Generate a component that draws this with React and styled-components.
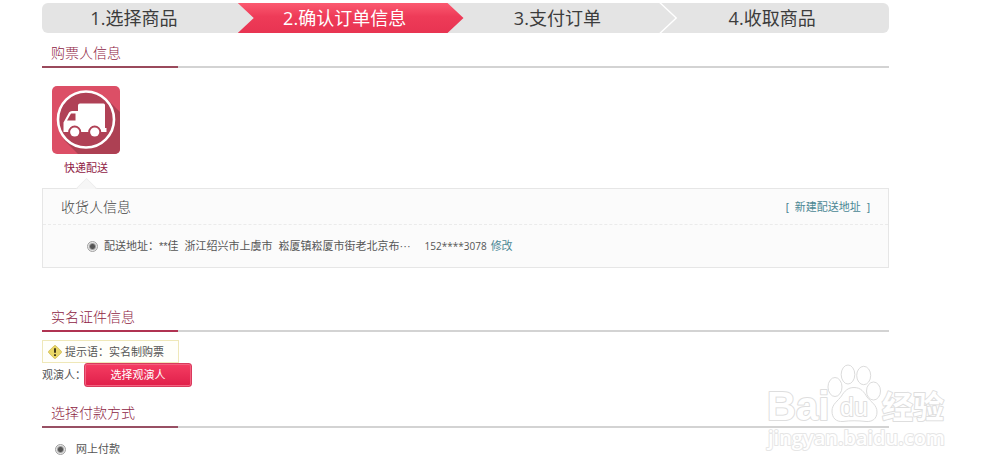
import React, { useState } from "react";
import styled, { createGlobalStyle, css } from "styled-components";

const GlobalStyle = createGlobalStyle`
   * {
      box-sizing: border-box;
   }

   body {
      margin: 0;
      background: #fff;
      color: #555;
      font-family: "Liberation Sans", "Noto Sans CJK SC", sans-serif;
      font-size: 11px;
      line-height: 16px;
   }
`;

const Page = styled.main`
   position: relative;
   padding: 3px 111px 12px 42px;
`;

const Steps = styled.ol`
   display: flex;
   height: 30px;
   margin: 0;
   padding: 0;
   list-style: none;
   background: #e4e4e4;
   border-radius: 6px;
`;

const Step = styled.li`
   position: relative;
   display: flex;
   flex: none;
   align-items: center;
   justify-content: center;
   width: 25%;
   padding-right: 28px;
   color: #3c3c3c;
   font-family: "Open Sans", "Noto Sans CJK SC", sans-serif;
   font-size: 18px;
   line-height: 30px;

   &:last-child {
      padding-right: 22px;
   }

   ${(props) =>
      props.$active &&
      css`
         width: calc(25% + 16px);
         margin-left: -16px;
         padding-right: 14px;
         background: linear-gradient(#fb5a70, #ee3b58 45%, #e83452);
         color: #fff;
         clip-path: polygon(
            0 0,
            calc(100% - 18px) 0,
            calc(100% - 2px) 50%,
            calc(100% - 18px) 100%,
            0 100%,
            16px 50%
         );
      `}

   ${(props) =>
      props.$divided &&
      css`
         &::after {
            content: "";
            position: absolute;
            top: 0;
            right: 0;
            width: 18px;
            height: 100%;
            background: #fff;
            clip-path: polygon(0 0, 2px 0, 100% 50%, 2px 100%, 0 100%, 16px 50%);
         }
      `}
`;

const SectionHead = styled.header`
   margin-top: ${(props) => props.$top}px;
   border-bottom: 2px solid #d3d3d3;
`;

const SectionTitle = styled.h2`
   width: 136px;
   height: 26px;
   margin: 0 0 -2px;
   padding-left: 9px;
   border-bottom: 2px solid ${(props) => props.$rule};
   color: #8e2443;
   font-size: 14px;
   font-weight: 300;
   line-height: 22px;
`;

const Delivery = styled.button`
   display: flex;
   flex-direction: column;
   align-items: center;
   gap: 6px;
   margin: 18px 0 0 10px;
   padding: 0;
   border: 0;
   background: none;
   color: #8f2144;
   font: inherit;
   cursor: pointer;

   svg {
      display: block;
   }
`;

const Panel = styled.section`
   position: relative;
   margin-top: 12px;
   border: 1px solid #e6e6e6;
   background: #fbfbfb;

   &::before {
      content: "";
      position: absolute;
      top: -8px;
      left: 36px;
      width: 14px;
      height: 14px;
      border: solid #ececec;
      border-width: 1px 0 0 1px;
      background: linear-gradient(135deg, #f6f6f6 50%, #fbfbfb 50%);
      transform: rotate(45deg);
   }
`;

const PanelHead = styled.div`
   position: relative;
   display: flex;
   align-items: center;
   justify-content: space-between;
   height: 36px;
   padding: 0 18px;
   border-bottom: 1px dashed #ebebeb;
`;

const PanelTitle = styled.h3`
   margin: 0;
   color: #444;
   font-size: 14px;
   font-weight: 300;
   line-height: 20px;
`;

const Link = styled.a`
   color: #4a8794;
   text-decoration: none;
   white-space: pre;
`;

const AddressRow = styled.div`
   display: flex;
   align-items: center;
   height: 42px;
   padding-left: 44px;
`;

const AddressLabel = styled.label`
   display: flex;
   align-items: center;
   gap: 6px;
   white-space: nowrap;
`;

const Phone = styled.span`
   margin: 0 4px 0 14px;
   font-family: "Open Sans", "Noto Sans CJK SC", sans-serif;
   font-size: 10px;
`;

const Radio = styled.input.attrs({ type: "radio" })`
   appearance: none;
   width: 11px;
   height: 11px;
   margin: 0;
   border: 1px solid #a0a0a0;
   border-radius: 50%;
   background: #f4f4f4;

   &:checked {
      background: radial-gradient(circle, #555 0 2px, #e8e8e8 4px);
   }
`;

const Tip = styled.p`
   display: flex;
   align-items: center;
   gap: 3px;
   width: 137px;
   height: 23px;
   margin: 8px 0 0;
   padding-left: 5px;
   border: 1px solid #efe8b8;
   background: #fffffa;
`;

const ViewerRow = styled.div`
   display: flex;
   align-items: center;
`;

const PickButton = styled.button`
   width: 108px;
   height: 24px;
   padding: 0;
   border: 1px solid #d93a5d;
   border-radius: 3px;
   background: linear-gradient(#f53d62, #e01f4a);
   box-shadow: inset 0 0 0 1px #f4617f;
   color: #fff;
   font: inherit;
   cursor: pointer;
`;

const ViewerLabel = styled.label`
   width: 42px;
   white-space: nowrap;
`;

const Payment = styled.label`
   display: flex;
   align-items: center;
   gap: 10px;
   margin: 13px 0 0 13px;
`;

const Watermark = styled.svg`
   position: absolute;
   right: 50px;
   bottom: 0;
   width: 186px;
   height: 108px;
   pointer-events: none;
`;

const TruckIcon = () => (
   <svg width="68" height="68" viewBox="0 0 68 68" aria-hidden="true">
      <defs>
         <clipPath id="tile">
            <rect width="68" height="68" rx="5" />
         </clipPath>
      </defs>
      <g clipPath="url(#tile)">
         <rect width="68" height="68" fill="#dc4f66" />
         <path d="M54 12 68 26V68H26L12 54Z" fill="#ad4053" />
         <circle cx="34" cy="33.5" r="28" fill="#b04156" stroke="#fff" strokeWidth="2.6" />
         <path
            d="M28 17.5H51.5Q53 17.5 53 19V42H54.5V46H49.2A6.5 6.5 0 0 0 36.2 46H29.2A6.5 6.5 0 0 0 16.2 46H11.5V36.5L17 26.5Q18 25 20 25H26V19.5Q26 17.500 28 17.5Z"
            fill="#fff"
         />
         <path d="M19 27.5H23.5V34.5H15Z" fill="#ad4053" />
         <circle cx="22.7" cy="46" r="4.6" fill="#fff" />
         <circle cx="42.7" cy="46" r="4.6" fill="#fff" />
      </g>
   </svg>
);

const WarningIcon = () => (
   <svg width="14" height="14" viewBox="0 0 14 14" aria-hidden="true">
      <path
         d="M6 .9Q7 0 8 .9L13.1 6Q14 7 13.1 8L8 13.1Q7 14 6 13.1L.9 8Q0 7 .9 6Z"
         fill="#e9d768"
         stroke="#cbb44b"
         strokeWidth=".7"
      />
      <path d="M7 3.2V7.8M7 9.2V11" stroke="#332c14" strokeWidth="1.8" />
   </svg>
);

const Logo = () => (
   <Watermark viewBox="764 361 186 108" aria-hidden="true">
      <g fill="#fff" stroke="#dcdcdc">
         <ellipse cx="835" cy="387" rx="7" ry="9.5" />
         <ellipse cx="848" cy="374.5" rx="6.8" ry="9.5" />
         <ellipse cx="863.7" cy="375.5" rx="7" ry="9.2" />
         <ellipse cx="873.5" cy="391" rx="7" ry="9" />
         <path d="M854 387.5C861 387.5 864 392 867 397C871 402 877 405 877 412C877 419 872 422 866 421.5C858 420.5 850 420.5 843 421.5C836 422 832 418 832 411C832 404 838 401 841.5 396C844.5 391 848 387.5 854 387.5Z" />
      </g>
      <g
         fill="#fff"
         stroke="#dedede"
         strokeWidth="2"
         strokeLinejoin="round"
         paintOrder="stroke"
         fontFamily="'Liberation Sans', 'Noto Sans CJK SC', sans-serif"
      >
         <text x="767" y="420" fontSize="40" fontWeight="700">
            Bai
         </text>
         <text x="840" y="416" fontSize="25">
            du
         </text>
         <text x="882" y="418" fontSize="31" fontWeight="700">
            经验
         </text>
         <text
            x="768"
            y="445"
            fontSize="20"
            fontWeight="600"
            stroke="#e6e6e6"
            fontFamily="'Open Sans', sans-serif"
         >
            jingyan.baidu.com
         </text>
      </g>
   </Watermark>
);

const App = () => {
   const [payment, setPayment] = useState("online");

   return (
      <Page>
         <GlobalStyle />
         <Steps>
            <Step>1.选择商品</Step>
            <Step $active aria-current="step">
               2.确认订单信息
            </Step>
            <Step $divided>3.支付订单</Step>
            <Step>4.收取商品</Step>
         </Steps>

         <SectionHead $top={9}>
            <SectionTitle $rule="#9a4a5c">购票人信息</SectionTitle>
         </SectionHead>
         <Delivery type="button">
            <TruckIcon />
            快递配送
         </Delivery>
         <Panel>
            <PanelHead>
               <PanelTitle>收货人信息</PanelTitle>
               <Link href="#new">{"[  新建配送地址  ]"}</Link>
            </PanelHead>
            <AddressRow>
               <AddressLabel>
                  <Radio name="address" defaultChecked />
                  <span>配送地址：**佳</span>
                  <span>浙江绍兴市上虞市</span>
                  <span>崧厦镇崧厦市街老北京布···</span>
               </AddressLabel>
               <Phone>152****3078</Phone>
               <Link href="#edit">修改</Link>
            </AddressRow>
         </Panel>

         <SectionHead $top={38}>
            <SectionTitle $rule="#b03352">实名证件信息</SectionTitle>
         </SectionHead>
         <Tip>
            <WarningIcon />
            提示语：实名制购票
         </Tip>
         <ViewerRow>
            <ViewerLabel htmlFor="viewer">观演人：</ViewerLabel>
            <PickButton id="viewer" type="button">
               选择观演人
            </PickButton>
         </ViewerRow>

         <SectionHead $top={15}>
            <SectionTitle $rule="#985064">选择付款方式</SectionTitle>
         </SectionHead>
         <Payment>
            <Radio
               name="payment"
               checked={payment === "online"}
               onChange={() => setPayment("online")}
            />
            网上付款
         </Payment>
         <Logo />
      </Page>
   );
};

export default App;
